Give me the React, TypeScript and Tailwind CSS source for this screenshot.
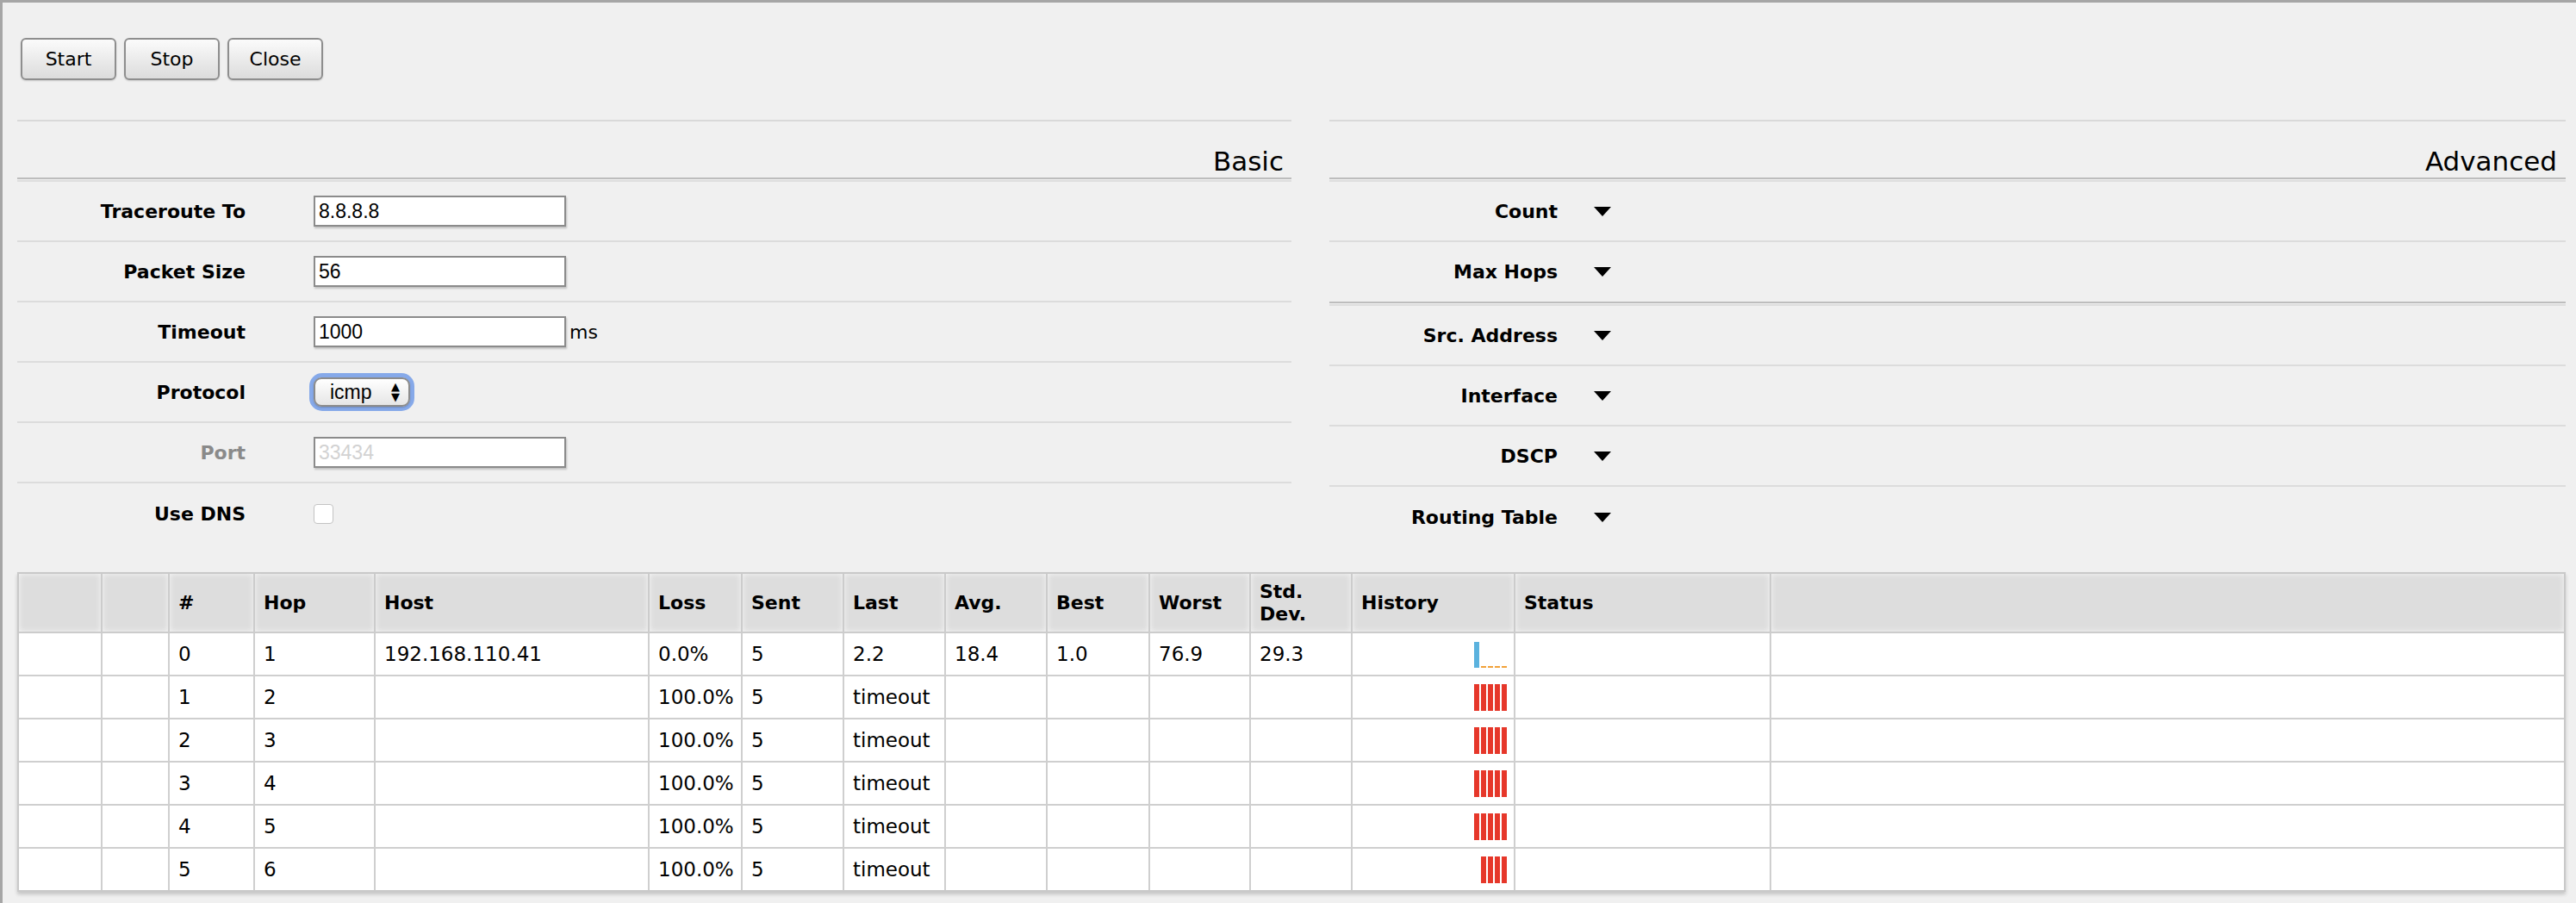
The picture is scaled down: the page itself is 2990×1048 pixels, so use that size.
import React from "react";

const Tri = () => (
  <svg width="20" height="11" viewBox="0 0 20 11">
    <polygon points="0,0 20,0 10,11" fill="#000" />
  </svg>
);

const DoubleLine = () => (
  <div className="flex flex-col">
    <div className="h-[2px] bg-[#bdbdbd]" />
    <div className="h-[1px]" />
    <div className="h-[2px] bg-[#dedede]" />
  </div>
);

const Btn = ({ children }: { children: React.ReactNode }) => (
  <div className="w-[111px] h-[49px] flex items-center justify-center rounded-[6px] border-2 border-[#8e8e8e] bg-gradient-to-b from-[#fbfbfb] to-[#dcdcdc] text-[22px] text-black shadow-[0_1px_2px_rgba(0,0,0,0.15)]">
    {children}
  </div>
);

const TextBox = ({ value, muted }: { value: string; muted?: boolean }) => (
  <div
    className={
      "w-[293px] h-[36px] border-2 border-[#8b8b8b] bg-white pl-[4px] flex items-center text-[23px] font-['Liberation_Sans',sans-serif] shadow-[1px_2px_2px_rgba(0,0,0,0.2)] " +
      (muted ? "text-[#d2d2d2]" : "text-black")
    }
  >
    {value}
  </div>
);

const LeftRow = ({
  label,
  children,
  last,
  muted,
}: {
  label: string;
  children?: React.ReactNode;
  last?: boolean;
  muted?: boolean;
}) => (
  <div className={"h-[70px] flex items-center " + (last ? "" : "border-b-2 border-[#dcdcdc]")}>
    <span className={"w-[265px] text-right font-bold text-[22px] " + (muted ? "text-[#8a8a8a]" : "text-black")}>
      {label}
    </span>
    <div className="ml-[79px] flex items-center">{children}</div>
  </div>
);

const RightRow = ({ label, last, h }: { label: string; last?: boolean; h?: string }) => (
  <div className={(h ?? "h-[70px]") + " flex items-center " + (last ? "" : "border-b-2 border-[#dcdcdc]")}>
    <span className="w-[265px] text-right font-bold text-[22px] text-black">{label}</span>
    <div className="ml-[42px] flex items-center">
      <Tri />
    </div>
  </div>
);

const History = ({ kind }: { kind: "first" | "five" | "four" }) => {
  if (kind === "first") {
    return (
      <div className="flex items-end gap-[2px] h-[31px]">
        <div className="w-[6px] h-[30px] bg-[#5bb2de]" />
        <div className="w-[6px] h-[2px] bg-[#f2a23a]" />
        <div className="w-[6px] h-[2px] bg-[#f2a23a]" />
        <div className="w-[6px] h-[2px] bg-[#f2a23a]" />
        <div className="w-[6px] h-[2px] bg-[#f2a23a]" />
      </div>
    );
  }
  const n = kind === "five" ? 5 : 4;
  return (
    <div className="flex items-end gap-[2px] h-[31px]">
      {Array.from({ length: n }).map((_, i) => (
        <div key={i} className="w-[6px] h-[31px] bg-[#e6372a]" />
      ))}
    </div>
  );
};

const headers: React.ReactNode[] = [
  "",
  "",
  "#",
  "Hop",
  "Host",
  "Loss",
  "Sent",
  "Last",
  "Avg.",
  "Best",
  "Worst",
  <span key="sd" className="leading-[26px] block">
    Std.
    <br />
    Dev.
  </span>,
  "History",
  "Status",
  "",
];

type RowData = { cells: string[]; hist: "first" | "five" | "four" };

const rows: RowData[] = [
  { cells: ["", "", "0", "1", "192.168.110.41", "0.0%", "5", "2.2", "18.4", "1.0", "76.9", "29.3"], hist: "first" },
  { cells: ["", "", "1", "2", "", "100.0%", "5", "timeout", "", "", "", ""], hist: "five" },
  { cells: ["", "", "2", "3", "", "100.0%", "5", "timeout", "", "", "", ""], hist: "five" },
  { cells: ["", "", "3", "4", "", "100.0%", "5", "timeout", "", "", "", ""], hist: "five" },
  { cells: ["", "", "4", "5", "", "100.0%", "5", "timeout", "", "", "", ""], hist: "five" },
  { cells: ["", "", "5", "6", "", "100.0%", "5", "timeout", "", "", "", ""], hist: "four" },
];

export default function App() {
  return (
    <div className="w-[2990px] h-[1048px] overflow-hidden bg-[#f0f0f0] border-t-[3px] border-l-[3px] border-[#a6a6a6] font-['DejaVu_Sans',sans-serif] text-black">
      {/* Toolbar */}
      <div className="pt-[41px] pl-[21px] flex gap-[9px]">
        <Btn>Start</Btn>
        <Btn>Stop</Btn>
        <Btn>Close</Btn>
      </div>

      {/* Sections */}
      <div className="mt-[46px] pl-[17px] flex items-start gap-[44px]">
        {/* Basic */}
        <div className="w-[1479px] border-t-2 border-[#d9d9d9]">
          <div className="h-[65px] flex items-end justify-end pr-[9px] pb-[1px]">
            <span className="text-[31px] leading-[36px]">Basic</span>
          </div>
          <DoubleLine />
          <LeftRow label="Traceroute To">
            <TextBox value="8.8.8.8" />
          </LeftRow>
          <LeftRow label="Packet Size">
            <TextBox value="56" />
          </LeftRow>
          <LeftRow label="Timeout">
            <TextBox value="1000" />
            <span className="ml-[4px] text-[22px]">ms</span>
          </LeftRow>
          <LeftRow label="Protocol">
            <div className="rounded-[10px] shadow-[0_0_0_5px_#86a9e9]">
              <div className="w-[112px] h-[34px] rounded-[9px] border-2 border-[#8c8c8c] bg-gradient-to-b from-white to-[#e6e6e6] flex items-center pl-[17px] pr-[10px] text-[23px] font-['Liberation_Sans',sans-serif] shadow-[0_1px_2px_rgba(0,0,0,0.2)]">
                <span className="flex-1">icmp</span>
                <span className="flex flex-col items-center text-[13px] leading-[12px] font-['DejaVu_Sans',sans-serif]">
                  <span>▲</span>
                  <span>▼</span>
                </span>
              </div>
            </div>
          </LeftRow>
          <LeftRow label="Port" muted>
            <TextBox value="33434" muted />
          </LeftRow>
          <LeftRow label="Use DNS" last>
            <div className="w-[23px] h-[23px] rounded-[4px] border border-[#c3c3c3] bg-white" />
          </LeftRow>
        </div>

        {/* Advanced */}
        <div className="w-[1435px] border-t-2 border-[#d9d9d9]">
          <div className="h-[65px] flex items-end justify-end pr-[10px] pb-[1px]">
            <span className="text-[31px] leading-[36px]">Advanced</span>
          </div>
          <DoubleLine />
          <RightRow label="Count" />
          <RightRow label="Max Hops" last h="h-[69px]" />
          <DoubleLine />
          <RightRow label="Src. Address" />
          <RightRow label="Interface" />
          <RightRow label="DSCP" />
          <RightRow label="Routing Table" last />
        </div>
      </div>

      {/* Table */}
      <div className="mt-[29px] ml-[17px] w-[2958px] border-2 border-[#c9c9c9] bg-white shadow-[0_3px_4px_rgba(0,0,0,0.18)]">
        <div className="grid grid-cols-[97px_78px_99px_140px_318px_108px_118px_118px_118px_119px_117px_118px_189px_297px_1fr]">
          {headers.map((h, i) => (
            <div
              key={"h" + i}
              className={
                "h-[69px] bg-[#dddddd] shadow-[inset_0_0_6px_#f6f6f6] border-b-2 border-[#cccccc] flex items-center pl-[10px] font-bold text-[22px] " +
                (i < headers.length - 1 ? "border-r-2" : "")
              }
            >
              {h}
            </div>
          ))}
          {rows.map((r, ri) => {
            const last = ri === rows.length - 1;
            const cells: React.ReactNode[] = [...r.cells, "hist", "", ""];
            return cells.map((c, ci) => (
              <div
                key={ri + "-" + ci}
                className={
                  (last ? "h-[48px] " : "h-[50px] border-b-2 ") +
                  "border-[#cfcfcf] bg-white flex items-center text-[23px] " +
                  (ci < cells.length - 1 ? "border-r-2 " : "") +
                  (ci === 12 ? "justify-end pr-[8px]" : "pl-[10px]")
                }
              >
                {ci === 12 ? <History kind={r.hist} /> : c}
              </div>
            ));
          })}
        </div>
      </div>
    </div>
  );
}
